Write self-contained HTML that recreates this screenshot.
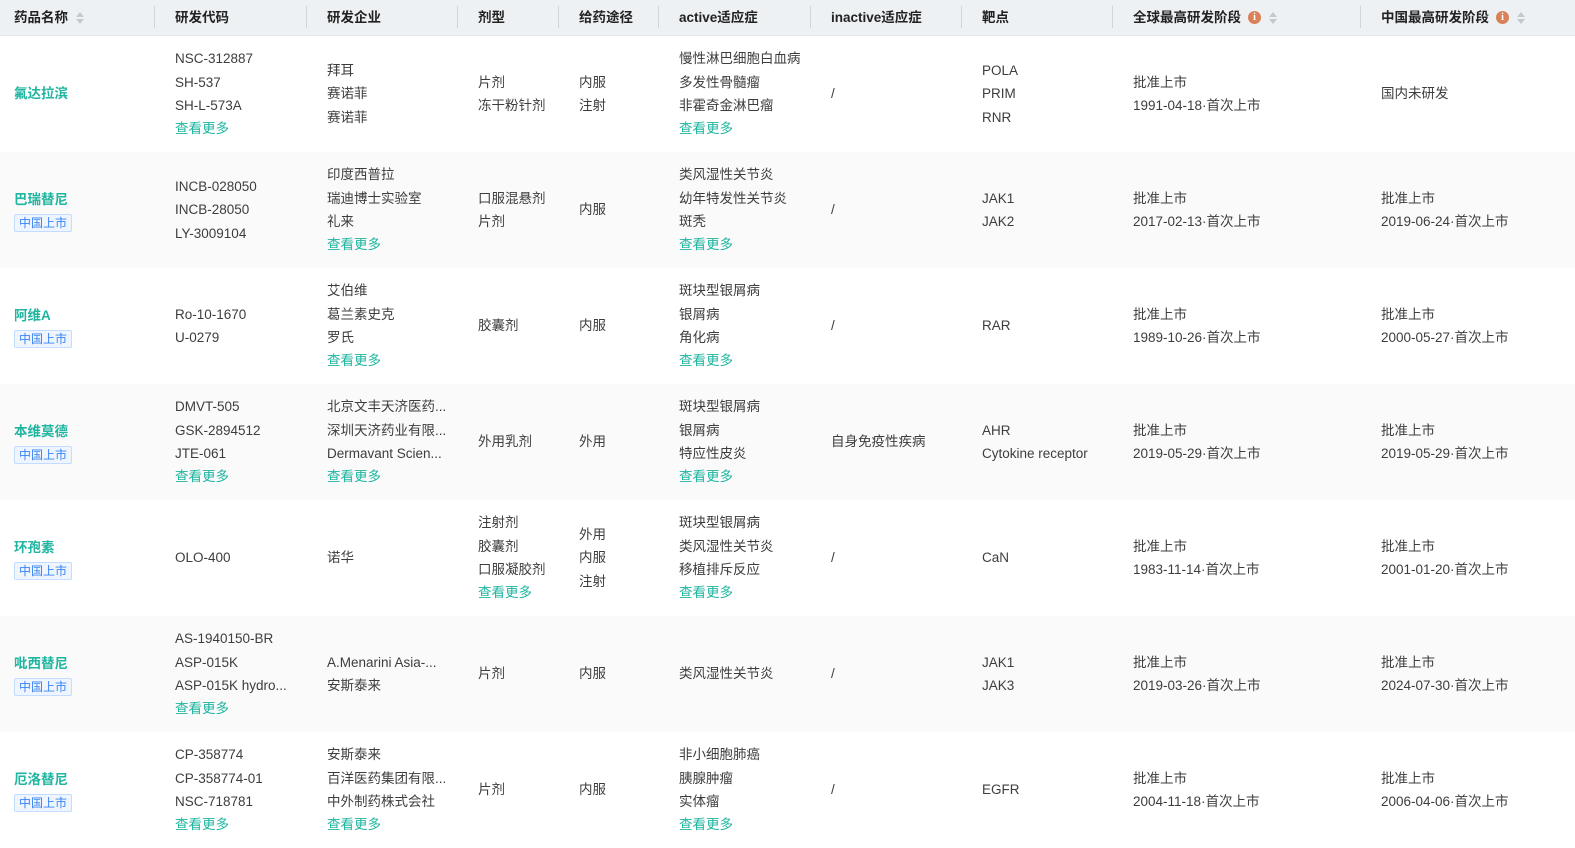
<!DOCTYPE html>
<html><head><meta charset="utf-8"><style>
*{margin:0;padding:0;box-sizing:border-box}
body{width:1575px;height:807px;overflow:hidden;background:#fff;font-family:"Liberation Sans","Noto Sans CJK SC",sans-serif;font-size:13.5px;color:#3d3d3d}
.row{display:flex;height:116px}
.row.alt{background:#fafafa}
.hd{display:flex;height:36px;background:#eef1f3;border-bottom:1px solid #e6e9ec}
.c{display:flex;flex-direction:column;justify-content:center;padding-left:20px;line-height:23.3px;white-space:nowrap;overflow:hidden}
.c:first-child{padding-left:14px}
.hd .c{font-weight:bold;color:#222;position:relative;flex-direction:row;align-items:center;justify-content:flex-start}
.hd .c+.c::before{content:"";position:absolute;left:0;top:6px;height:22px;width:1px;background:#cfd6d9}
.w0{width:154px}.w1{width:152px}.w2{width:151px}.w3{width:101px}.w4{width:100px}.w5{width:152px}.w6{width:151px}.w7{width:151px}.w8{width:248px}.w9{width:215px}
.g{color:#1fb5a0}
.nm{color:#1fb5a0;font-weight:bold}
.tag{display:inline-block;align-self:flex-start;margin-top:2px;height:18px;line-height:16px;padding:0 4px;border:1px solid #c4dcff;background:#eef5ff;color:#3a84f2;font-size:12px;border-radius:2px}
.sort{display:inline-block;margin-left:8px;width:8px;height:14px;position:relative}
.sort::before{content:"";position:absolute;left:0;top:1px;border:4px solid transparent;border-bottom:5px solid #c5c9cc;border-top:0}
.sort::after{content:"";position:absolute;left:0;top:8px;border:4px solid transparent;border-top:5px solid #c5c9cc;border-bottom:0}
.info{display:inline-block;margin-left:7px;width:13px;height:13px;border-radius:50%;background:#d9825a;color:#fff;font-size:10px;line-height:13px;text-align:center;font-weight:bold;font-family:"Liberation Serif",serif}
.w1,.w2,.w3,.w4,.w5,.w6,.w7,.w8,.w9{padding-left:21px}
</style></head><body>
<div class="hd">
<div class="c w0">药品名称<span class="sort"></span></div>
<div class="c w1">研发代码</div>
<div class="c w2">研发企业</div>
<div class="c w3">剂型</div>
<div class="c w4">给药途径</div>
<div class="c w5">active适应症</div>
<div class="c w6">inactive适应症</div>
<div class="c w7">靶点</div>
<div class="c w8">全球最高研发阶段<span class="info">i</span><span class="sort"></span></div>
<div class="c w9">中国最高研发阶段<span class="info">i</span><span class="sort"></span></div>
</div>

<div class="row">
<div class="c w0"><div class="nm">氟达拉滨</div></div>
<div class="c w1"><div>NSC-312887</div><div>SH-537</div><div>SH-L-573A</div><div class="g">查看更多</div></div>
<div class="c w2"><div>拜耳</div><div>赛诺菲</div><div>赛诺菲</div></div>
<div class="c w3"><div>片剂</div><div>冻干粉针剂</div></div>
<div class="c w4"><div>内服</div><div>注射</div></div>
<div class="c w5"><div>慢性淋巴细胞白血病</div><div>多发性骨髓瘤</div><div>非霍奇金淋巴瘤</div><div class="g">查看更多</div></div>
<div class="c w6"><div>/</div></div>
<div class="c w7"><div>POLA</div><div>PRIM</div><div>RNR</div></div>
<div class="c w8"><div>批准上市</div><div>1991-04-18·首次上市</div></div>
<div class="c w9"><div>国内未研发</div></div>
</div>

<div class="row alt">
<div class="c w0"><div class="nm">巴瑞替尼</div><span class="tag">中国上市</span></div>
<div class="c w1"><div>INCB-028050</div><div>INCB-28050</div><div>LY-3009104</div></div>
<div class="c w2"><div>印度西普拉</div><div>瑞迪博士实验室</div><div>礼来</div><div class="g">查看更多</div></div>
<div class="c w3"><div>口服混悬剂</div><div>片剂</div></div>
<div class="c w4"><div>内服</div></div>
<div class="c w5"><div>类风湿性关节炎</div><div>幼年特发性关节炎</div><div>斑秃</div><div class="g">查看更多</div></div>
<div class="c w6"><div>/</div></div>
<div class="c w7"><div>JAK1</div><div>JAK2</div></div>
<div class="c w8"><div>批准上市</div><div>2017-02-13·首次上市</div></div>
<div class="c w9"><div>批准上市</div><div>2019-06-24·首次上市</div></div>
</div>

<div class="row">
<div class="c w0"><div class="nm">阿维A</div><span class="tag">中国上市</span></div>
<div class="c w1"><div>Ro-10-1670</div><div>U-0279</div></div>
<div class="c w2"><div>艾伯维</div><div>葛兰素史克</div><div>罗氏</div><div class="g">查看更多</div></div>
<div class="c w3"><div>胶囊剂</div></div>
<div class="c w4"><div>内服</div></div>
<div class="c w5"><div>斑块型银屑病</div><div>银屑病</div><div>角化病</div><div class="g">查看更多</div></div>
<div class="c w6"><div>/</div></div>
<div class="c w7"><div>RAR</div></div>
<div class="c w8"><div>批准上市</div><div>1989-10-26·首次上市</div></div>
<div class="c w9"><div>批准上市</div><div>2000-05-27·首次上市</div></div>
</div>

<div class="row alt">
<div class="c w0"><div class="nm">本维莫德</div><span class="tag">中国上市</span></div>
<div class="c w1"><div>DMVT-505</div><div>GSK-2894512</div><div>JTE-061</div><div class="g">查看更多</div></div>
<div class="c w2"><div>北京文丰天济医药...</div><div>深圳天济药业有限...</div><div>Dermavant Scien...</div><div class="g">查看更多</div></div>
<div class="c w3"><div>外用乳剂</div></div>
<div class="c w4"><div>外用</div></div>
<div class="c w5"><div>斑块型银屑病</div><div>银屑病</div><div>特应性皮炎</div><div class="g">查看更多</div></div>
<div class="c w6"><div>自身免疫性疾病</div></div>
<div class="c w7"><div>AHR</div><div>Cytokine receptor</div></div>
<div class="c w8"><div>批准上市</div><div>2019-05-29·首次上市</div></div>
<div class="c w9"><div>批准上市</div><div>2019-05-29·首次上市</div></div>
</div>

<div class="row">
<div class="c w0"><div class="nm">环孢素</div><span class="tag">中国上市</span></div>
<div class="c w1"><div>OLO-400</div></div>
<div class="c w2"><div>诺华</div></div>
<div class="c w3"><div>注射剂</div><div>胶囊剂</div><div>口服凝胶剂</div><div class="g">查看更多</div></div>
<div class="c w4"><div>外用</div><div>内服</div><div>注射</div></div>
<div class="c w5"><div>斑块型银屑病</div><div>类风湿性关节炎</div><div>移植排斥反应</div><div class="g">查看更多</div></div>
<div class="c w6"><div>/</div></div>
<div class="c w7"><div>CaN</div></div>
<div class="c w8"><div>批准上市</div><div>1983-11-14·首次上市</div></div>
<div class="c w9"><div>批准上市</div><div>2001-01-20·首次上市</div></div>
</div>

<div class="row alt">
<div class="c w0"><div class="nm">吡西替尼</div><span class="tag">中国上市</span></div>
<div class="c w1"><div>AS-1940150-BR</div><div>ASP-015K</div><div>ASP-015K hydro...</div><div class="g">查看更多</div></div>
<div class="c w2"><div>A.Menarini Asia-...</div><div>安斯泰来</div></div>
<div class="c w3"><div>片剂</div></div>
<div class="c w4"><div>内服</div></div>
<div class="c w5"><div>类风湿性关节炎</div></div>
<div class="c w6"><div>/</div></div>
<div class="c w7"><div>JAK1</div><div>JAK3</div></div>
<div class="c w8"><div>批准上市</div><div>2019-03-26·首次上市</div></div>
<div class="c w9"><div>批准上市</div><div>2024-07-30·首次上市</div></div>
</div>

<div class="row">
<div class="c w0"><div class="nm">厄洛替尼</div><span class="tag">中国上市</span></div>
<div class="c w1"><div>CP-358774</div><div>CP-358774-01</div><div>NSC-718781</div><div class="g">查看更多</div></div>
<div class="c w2"><div>安斯泰来</div><div>百洋医药集团有限...</div><div>中外制药株式会社</div><div class="g">查看更多</div></div>
<div class="c w3"><div>片剂</div></div>
<div class="c w4"><div>内服</div></div>
<div class="c w5"><div>非小细胞肺癌</div><div>胰腺肿瘤</div><div>实体瘤</div><div class="g">查看更多</div></div>
<div class="c w6"><div>/</div></div>
<div class="c w7"><div>EGFR</div></div>
<div class="c w8"><div>批准上市</div><div>2004-11-18·首次上市</div></div>
<div class="c w9"><div>批准上市</div><div>2006-04-06·首次上市</div></div>
</div>
</body></html>
